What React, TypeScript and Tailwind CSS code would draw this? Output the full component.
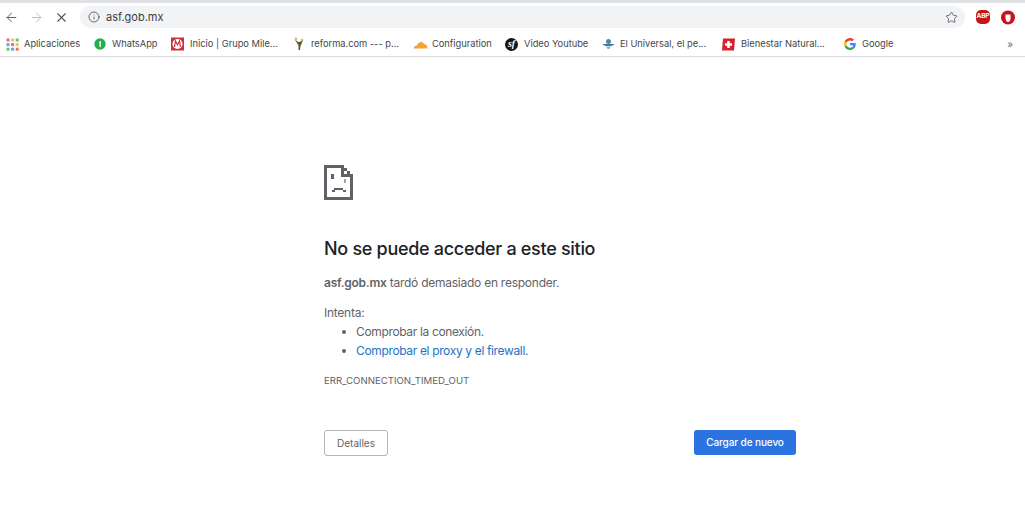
import React from "react";
import { ArrowLeft, ArrowRight, X, Info, Star } from "lucide-react";

const Apps = () => (
  <svg width="13" height="13" viewBox="0 0 13 13">
    {[
      ["#e8726b", "#f0c45a", "#6fbf85"],
      ["#6f9fe8", "#e8726b", "#f0c45a"],
      ["#6fbf85", "#6f9fe8", "#e8726b"],
    ].map((r, y) => r.map((c, x) => <rect key={x + "-" + y} x={x * 4.6 + 0.5} y={y * 4.6 + 0.5} width="3" height="3" fill={c} />))}
  </svg>
);
const Whats = () => (
  <svg width="12" height="12" viewBox="0 0 12 12">
    <circle cx="6" cy="6" r="5.7" fill="#22b04b" />
    <path d="M4.500 4.500 L6.200 3 H7 V9 H5.500 V5 Z" fill="#e8f6ec" />
  </svg>
);
const Mil = () => (
  <svg width="13" height="14" viewBox="0 0 13 14">
    <rect x="0" y="0.5" width="13" height="13" fill="#c8343f" />
    <circle cx="6.5" cy="7" r="5" fill="#fff" />
    <path d="M3.5 10 L4.5 4 L6.5 8 L8.5 4 L9.5 10" fill="none" stroke="#c8343f" strokeWidth="1.2" />
  </svg>
);
const Reforma = () => (
  <svg width="12" height="14" viewBox="0 0 12 14">
    <path d="M1.500 2 L5 5 L8 4.500 L10.500 1.500 L8.500 7 L7.500 9 L7 13 L5.500 13 L5.500 8.500 Z" fill="#5c5a2a" />
    <circle cx="3" cy="1.800" r="1.200" fill="#d9b84a" />
    <circle cx="8.500" cy="3" r="0.900" fill="#d9b84a" />
  </svg>
);
const Cloud = () => (
  <svg width="15" height="9" viewBox="0 0 15 9">
    <path d="M0.5 8.5 C1 6 3 5.5 4 5.5 C5 2 9 0.5 11 4 C13 4 14.5 6 14.5 8.5 Z" fill="#f2a33a" />
  </svg>
);
const Sf = () => (
  <div className="flex h-[13px] w-[13px] items-center justify-center rounded-full bg-[#161616] text-[10px] font-bold italic leading-none text-white [font-family:'Liberation_Serif',serif]">
    sf
  </div>
);
const Universal = () => (
  <svg width="13" height="12" viewBox="0 0 13 12">
    <circle cx="6.5" cy="3.5" r="2.5" fill="#4f86a8" />
    <path d="M0 6 L13 6 L9.500 8 L3.500 8 Z" fill="#3c7a9c" />
    <path d="M4 8.500 L9 8.500 L7.500 11 L5.500 11 Z" fill="#8fb5ca" />
  </svg>
);
const Swiss = () => (
  <svg width="13" height="13" viewBox="0 0 13 13">
    <path d="M1 0.5 H13 L12 12.5 H0 Z" fill="#d4222e" />
    <path d="M5.2 3 H7.8 V5.2 H10 V7.8 H7.8 V10 H5.2 V7.8 H3 V5.2 H5.2 Z" fill="#fff" />
  </svg>
);
const Goog = () => (
  <svg width="12" height="12" viewBox="0 0 48 48">
    <path fill="#EA4335" d="M24 9.5c3.5 0 6.7 1.3 9.1 3.5l6.8-6.8C35.8 2.4 30.3 0 24 0 14.6 0 6.5 5.4 2.6 13.2l7.9 6.2C12.4 13.6 17.700 9.500 24 9.500z" />
    <path fill="#4285F4" d="M47 24.500c0-1.600-.1-3.100-.4-4.500H24v9h12.900c-.6 3-2.200 5.500-4.700 7.200l7.600 5.900C44.300 37.900 47 31.800 47 24.500z" />
    <path fill="#FBBC05" d="M10.500 28.600A14.500 14.500 0 0 1 10.500 19.400l-7.900-6.200a24 24 0 0 0 0 21.600z" />
    <path fill="#34A853" d="M24 48c6.500 0 11.900-2.100 15.800-5.900l-7.600-5.900c-2.100 1.400-4.900 2.300-8.200 2.300-6.300 0-11.600-4.200-13.500-9.900l-7.900 6.200C6.500 42.600 14.600 48 24 48z" />
  </svg>
);

const marks: [React.ReactNode, string, string, string, string][] = [
  [<Apps />, "Aplicaciones", "w-[88px]", "ml-[6px]", "w-[18px]"],
  [<Whats />, "WhatsApp", "w-[77px]", "", "w-[18px]"],
  [<Mil />, "Inicio | Grupo Mile...", "w-[122px]", "", "w-[19px]"],
  [<Reforma />, "reforma.com --- p...", "w-[120px]", "", "w-[18px]"],
  [<Cloud />, "Configuration", "w-[92px]", "", "w-[19px]"],
  [<Sf />, "Video Youtube", "w-[97px]", "", "w-[19px]"],
  [<Universal />, "El Universal, el pe...", "w-[120px]", "", "w-[18px]"],
  [<Swiss />, "Bienestar Natural...", "w-[122px]", "", "w-[19px]"],
  [<Goog />, "Google", "w-[60px]", "", "w-[18px]"],
];

const Sad = () => (
  <svg width="29" height="35" viewBox="0 0 29 35" shapeRendering="crispEdges" fill="#5f6368">
    <path d="M0 0 H20 V3 H23 V6 H26 V9 H29 V35 H0 Z M3 3 V32 H26 V12 H17 V3 Z M20 6 V9 H23 V6 Z" fillRule="evenodd" />
    <rect x="7" y="9" width="3" height="5" />
    <rect x="20" y="14" width="2" height="4" fill="#a4a7aa" />
    <rect x="10" y="23" width="9" height="2" />
    <rect x="7.500" y="25" width="3" height="2" />
    <rect x="18.500" y="25" width="3" height="2" />
  </svg>
);

export default function App() {
  return (
    <div className="flex h-[514px] w-[1025px] flex-col overflow-hidden bg-white [font-family:Inter,'Liberation_Sans',sans-serif]">
      <div className="h-[3px] bg-[#dfe1e5]" />
      <div className="flex h-[28px] items-center">
        <div className="flex w-[80px] items-center pl-[4px] text-[#5f6368]">
          <ArrowLeft size={15} strokeWidth={1.6} />
          <ArrowRight size={15} strokeWidth={1.6} className="ml-[10px] text-[#bcbfc3]" />
          <X size={15} strokeWidth={1.8} className="ml-[10px] text-[#4f5256]" />
        </div>
        <div className="flex h-[22px] w-[885px] items-center rounded-full bg-[#f1f3f4] pl-[8px] pr-[7px]">
          <Info size={12} strokeWidth={1.6} className="text-[#44474b]" />
          <span className="ml-[6px] text-[11px] text-[#3c4043]">asf.gob.mx</span>
          <Star size={13} strokeWidth={1.6} className="ml-auto text-[#5f6368]" />
        </div>
        <div className="ml-[11px] flex h-[14px] w-[14px] items-center justify-center rounded-[5px] bg-[#c5141c] text-[6.5px] font-bold tracking-[-0.2px] text-white">
          ABP
        </div>
        <svg width="14" height="15" viewBox="0 0 14 15" className="ml-[11px]">
          <circle cx="7" cy="7.500" r="7" fill="#c5141c" />
          <path d="M4.500 7 V4.500 H9.500 V9 C9.500 11 8 12 7 12 C5.500 12 4.500 10 4.500 7 Z" fill="#fff" />
        </svg>
      </div>
      <div className="flex h-[26px] items-center border-b border-[#d9dadc] pt-[1px] text-[9.3px] text-[#44474b]">
        {marks.map(([icon, label, w, ml, iw]) => (
          <div key={label} className={`flex shrink-0 items-center whitespace-nowrap ${w} ${ml}`}>
            <div className={`flex shrink-0 items-start ${iw}`}>{icon}</div>
            <span>{label}</span>
          </div>
        ))}
        <span className="ml-auto mr-[12px] text-[10px] text-[#6a6d70]">»</span>
      </div>

      <main className="ml-[324px] w-[472px] pt-[108px] text-[#5f6368]">
        <Sad />
        <h1 className="mt-[38px] text-[18px] font-medium leading-[22px] tracking-[-0.3px] text-[#202124]">No se puede acceder a este sitio</h1>
        <p className="mt-[13px] text-[12px] leading-[20px] tracking-[-0.25px]">
          <b className="font-semibold">asf.gob.mx</b> tardó demasiado en responder.
        </p>
        <p className="mt-[10px] text-[12px] leading-[19px] tracking-[-0.25px]">Intenta:</p>
        <ul className="text-[12px] leading-[19px] tracking-[-0.35px]">
          <li className="flex items-center">
            <span className="ml-[18px] mr-[10px] h-[4px] w-[4px] rounded-full bg-[#5f6368]" />
            Comprobar la conexión.
          </li>
          <li className="flex items-center">
            <span className="ml-[18px] mr-[10px] h-[4px] w-[4px] rounded-full bg-[#5f6368]" />
            <span className="text-[#1a73c8]">Comprobar el proxy y el firewall</span>.
          </li>
        </ul>
        <p className="mt-[15px] text-[9.6px] leading-[12px]">ERR_CONNECTION_TIMED_OUT</p>
        <div className="mt-[43px] flex items-start justify-between">
          <button className="h-[26px] w-[64px] rounded-[3px] border border-[#b4b6b9] text-[10px] font-normal text-[#5f6368]">Detalles</button>
          <button className="h-[25px] w-[102px] rounded-[3px] bg-[#2a73e0] text-[10px] font-medium tracking-[-0.1px] text-white">Cargar de nuevo</button>
        </div>
      </main>
    </div>
  );
}
